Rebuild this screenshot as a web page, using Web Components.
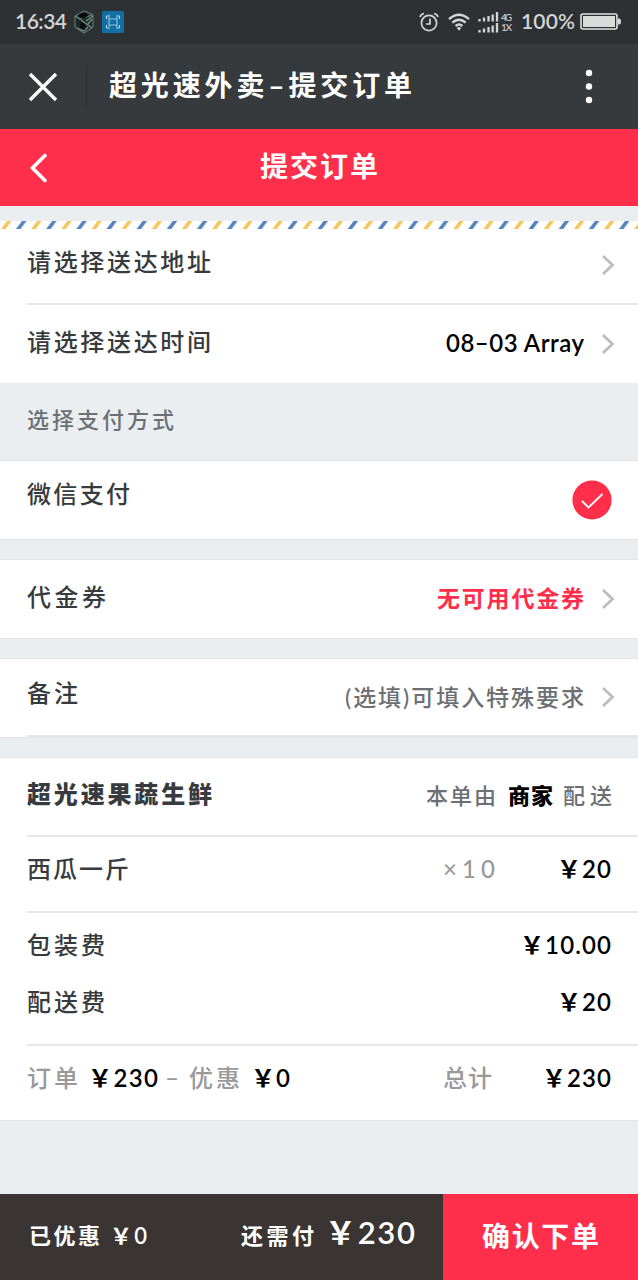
<!DOCTYPE html>
<html lang="zh-CN">
<head>
<meta charset="utf-8">
<title>提交订单</title>
<style>
  body {
    margin: 0;
    width: 638px;
    height: 1280px;
    overflow: hidden;
    background: #ebeef1;
    color: #373b3e;
    font-family: Lato, "Noto Sans CJK SC", sans-serif;
    font-weight: 500;
  }
</style>
</head>
<body>
<order-app></order-app>

<script>
const define = (name, html, setup) => {
  const template = document.createElement('template');
  template.innerHTML = html;

  customElements.define(name, class extends HTMLElement {
    constructor() {
      super();
      this.attachShadow({ mode: 'open' }).appendChild(template.content.cloneNode(true));
    }

    connectedCallback() {
      if (setup) setup(this, this.shadowRoot);
    }
  });
};

// one line of text, tracked out until it is `fit` pixels wide
define('fit-text', `
<style>
  :host {
    display: block;
    flex: none;
    line-height: 1;
  }
  span { display: block; width: max-content; white-space: nowrap; }
</style>
<span><slot></slot></span>
`, (host, root) => {
  const span = root.querySelector('span');
  const fit = Number(host.getAttribute('fit'));
  host.style.fontSize = `${host.getAttribute('size') || 24}px`;
  span.style.letterSpacing = '0px';
  const gaps = Math.max(host.textContent.length - 1, 1);
  const spacing = (fit - span.getBoundingClientRect().width) / gaps;
  span.style.letterSpacing = `${spacing}px`;
  span.style.marginRight = `${-spacing}px`;
});

const ICONS = {
  cube: [22, 24, `<path d="M11 1L20 5v12l-9 6-9-6V6z" fill="#1d2927" stroke="#5d756e" stroke-width="1.200"/>
    <path d="M2 6l5 3 12-4M8 10l11 8M4 18l7 3 4-4M13 11l7-5M15 14l4-5" fill="none" stroke="#769087" stroke-width="1.300"/>
    <path d="M6 4l7-1 2 3-5 3-4-2zM8 12l4 2v6l-5-2z" fill="#050a0a"/>`],
  capture: [22, 22, `<rect width="22" height="22" rx="1.5" fill="#126fa5"/>
    <path d="M4.500 8V5H8M14 5h3.500v3M17.500 14v3H14M8 17H4.500v-3" fill="none" stroke="#b8dbed" stroke-width="1"/>
    <path d="M7 7l1.500 1h5L15 7v8l-1.500-1h-5L7 15z" fill="none" stroke="#8fc1dd" stroke-width="1.200"/>`],
  alarm: [20, 20, `<g fill="none" stroke="#d3d5d6" stroke-width="1.700"><circle cx="10" cy="11" r="7.600"/>
    <path d="M1 5Q2 2 5 1.500M19 5Q18 2 15 1.500M11 6.500V12H7"/></g>`],
  wifi: [22, 18, `<g fill="none" stroke="#d3d5d6" stroke-width="2.400"><path d="M1 6.200Q11-2.500 21 6.200"/>
    <path d="M4.300 9.700Q11 4 17.700 9.700"/><path d="M7.600 13Q11 10 14.400 13"/></g>
    <path d="M8.800 15Q11 13.200 13.200 15L11 17.700z" fill="#d3d5d6"/>`],
  signal: [21, 21, `<path d="M1.500 7v2.500M6 5.500v4M10.500 4v5.500M14.700 2.500v7M19 0v9.500M1.500 18v2.500M6 16.500v4M10.500 15v5.500M14.700 13.500v7M19 11v9.500"
    fill="none" stroke="#d3d5d6" stroke-width="2.300"/>`],
  battery: [42, 18, `<rect x="1" y="1" width="36" height="15" rx="2" fill="none" stroke="#e4e5e5" stroke-width="1.600"/>
    <rect x="3" y="3" width="32" height="11" fill="#d9dada"/><path d="M38 5.500h1.500Q41 6 41 8.500t-1.500 3H38z" fill="#d9dada"/>`],
  close: [30, 30, `<path d="M2 2l26 26M28 2L2 28" stroke="#fff" stroke-width="3.300"/>`],
  dots: [8, 36, `<g fill="#fff"><circle cx="4" cy="4" r="3.200"/><circle cx="4" cy="17.500" r="3.200"/><circle cx="4" cy="31" r="3.200"/></g>`],
  back: [20, 30, `<path d="M16 2.500L3.500 15 16 27.500" fill="none" stroke="#fff" stroke-width="3.600" stroke-linecap="round"/>`],
  chevron: [14, 22, `<path d="M2 2l9.500 9L2 20" fill="none" stroke="#bcbcbc" stroke-width="2.700"/>`],
  check: [40, 40, `<circle cx="20" cy="20" r="19.600" fill="#ff2e4a"/>
    <path d="M10 21l6.500 6.500L30.500 14" fill="none" stroke="#fff" stroke-width="1.800"/>`],
};

define('ui-icon', `
<style>
  :host { display: block; flex: none; }
  svg { display: block; }
</style>
<div></div>
`, (host, root) => {
  const [w, h, shapes] = ICONS[host.getAttribute('name')];
  root.querySelector('div').innerHTML = `<svg width="${w}" height="${h}" viewBox="0 0 ${w} ${h}">${shapes}</svg>`;
});

define('status-bar', `
<style>
  :host {
    display: flex;
    align-items: center;
    box-sizing: border-box;
    height: 44px;
    padding: 0 16px 0 15px;
    background: #2e3133;
    color: #d3d5d6;
  }
  .push { margin-left: auto; }
  .net { margin: 0 9px 0 2px; }
  .big { font-weight: 600; padding-bottom: 4px; }
</style>
<fit-text class="big" size="21" fit="52">16:34</fit-text>
<ui-icon name="cube" style="margin-left:6px"></ui-icon>
<ui-icon name="capture" style="margin-left:7px"></ui-icon>
<ui-icon name="alarm" class="push"></ui-icon>
<ui-icon name="wifi" style="margin:0 8px 0 9px"></ui-icon>
<ui-icon name="signal"></ui-icon>
<div class="net"><fit-text size="10" fit="11">4G</fit-text><fit-text size="10" fit="11">1X</fit-text></div>
<fit-text class="big" size="21" fit="54">100%</fit-text>
<ui-icon name="battery" style="margin-left:5px"></ui-icon>
`);

define('nav-bar', `
<style>
  :host {
    display: flex;
    align-items: center;
    box-sizing: border-box;
    height: 85px;
    padding: 0 45px 0 28px;
    background: #373a3c;
    color: #fff;
    font-weight: 700;
  }
  i { width: 1px; height: 43px; margin: 0 22px 0 28px; background: #2b2e30; }
  .push { margin-left: auto; }
</style>
<ui-icon name="close"></ui-icon>
<i></i>
<slot></slot>
<ui-icon name="dots" class="push"></ui-icon>
`);

define('page-header', `
<style>
  :host {
    display: grid;
    grid-template-columns: 1fr auto 1fr;
    align-items: center;
    height: 77px;
    padding: 0 29px;
    background: #ff2e4a;
    color: #fff;
    font-weight: 700;
  }
</style>
<ui-icon name="back"></ui-icon>
<slot></slot>
`);

define('air-mail', `
<style>
  :host { display: block; height: 8px; background: #fff; }
  svg { display: block; }
</style>
<svg width="638" height="8">
  <pattern id="stripes" width="30.150" height="8" patternUnits="userSpaceOnUse">
    <path d="M1 8h4.500L11.500 0H7z" fill="#f7c65b"/>
    <path d="M16 8h4.500L26.500 0H22z" fill="#5482bd"/>
  </pattern>
  <rect width="638" height="8" fill="url(#stripes)"/>
</svg>
`);

define('list-row', `
<style>
  :host {
    display: flex;
    align-items: center;
    box-sizing: border-box;
    padding: 0 26px 0 27px;
    background: #fff;
  }
  .end { display: flex; align-items: center; margin-left: auto; }
  ::slotted(fit-text) { padding-bottom: 2px; }
</style>
<slot></slot>
<div class="end"><slot name="end"></slot></div>
`);

define('list-group', `
<style>
  :host {
    display: block;
    box-sizing: border-box;
    background: #fff;
    border-top: 1px solid #e2e4e7;
    border-bottom: 1px solid #e2e4e7;
  }
</style>
<slot></slot>
`);

define('inset-line', `
<style>
  :host { display: block; height: 2px; background: #fff; }
  div { height: 2px; margin-left: 27px; background: #e6e7e8; }
</style>
<div></div>
`);

define('pay-bar', `
<style>
  :host {
    display: flex;
    height: 86px;
    background: #3a3532;
    color: #fff;
    font-weight: 600;
  }
  .sum {
    display: flex;
    align-items: center;
    flex: 1;
    padding: 0 26px 2px 29px;
  }
  .due { display: flex; align-items: center; margin-left: auto; }
  .button {
    display: flex;
    align-items: center;
    justify-content: center;
    width: 195px;
    background: #ff2e4a;
    font-weight: 700;
  }
</style>
<div class="sum">
  <fit-text size="22" fit="71">已优惠</fit-text>
  <fit-text size="22" fit="37" style="margin-left:10px">￥0</fit-text>
  <div class="due">
    <fit-text size="22" fit="73">还需付</fit-text>
    <fit-text size="31" fit="90" style="margin:-8px 2px 0 11px">￥230</fit-text>
  </div>
</div>
<div class="button"><fit-text size="28" fit="117" style="padding-bottom:2px">确认下单</fit-text></div>
`);

define('order-app', `
<style>
  :host {
    display: flex;
    flex-direction: column;
    height: 1280px;
  }
  .gap { height: 15px; flex: none; }
  .section { height: 77px; box-sizing: border-box; padding: 26px 27px; }
  list-group + list-group { margin-top: 19px; }
  pay-bar { margin-top: auto; }
  .black { color: #000; font-weight: 600; }
  .grey { color: #6c7074; }
  .light { color: #999; }
  .red { color: #ff2e4a; font-weight: 700; }
  .bold { font-weight: 900; }
  [name="chevron"] { margin: 0 -3px 0 17px; }
</style>
<status-bar></status-bar>
<nav-bar><fit-text size="28" fit="303" style="margin-bottom:4px">超光速外卖–提交订单</fit-text></nav-bar>
<page-header><fit-text size="28" fit="118" style="margin-bottom:3px">提交订单</fit-text></page-header>
<div class="gap"></div>
<air-mail></air-mail>
<list-row style="height:74px">
  <fit-text fit="184" style="margin-bottom:7px">请选择送达地址</fit-text>
  <ui-icon slot="end" name="chevron" style="margin-bottom:2px"></ui-icon>
</list-row>
<inset-line></inset-line>
<list-row style="height:78px">
  <fit-text fit="184" style="margin-bottom:2px">请选择送达时间</fit-text>
  <fit-text slot="end" class="black" fit="138">08–03 Array</fit-text>
  <ui-icon slot="end" name="chevron"></ui-icon>
</list-row>
<div class="section"><fit-text size="22" fit="147" class="grey">选择支付方式</fit-text></div>
<list-group>
  <list-row style="height:78px">
    <fit-text fit="103" style="margin-bottom:11px">微信支付</fit-text>
    <ui-icon slot="end" name="check"></ui-icon>
  </list-row>
</list-group>
<list-group>
  <list-row style="height:78px">
    <fit-text fit="79" style="margin-bottom:3px">代金券</fit-text>
    <fit-text slot="end" class="red" size="23" fit="147">无可用代金券</fit-text>
    <ui-icon slot="end" name="chevron"></ui-icon>
  </list-row>
</list-group>
<list-group>
  <list-row style="height:76px">
    <fit-text fit="51" style="margin-bottom:6px">备注</fit-text>
    <fit-text slot="end" class="grey" size="23" fit="239" style="padding:0">(选填)可填入特殊要求</fit-text>
    <ui-icon slot="end" name="chevron"></ui-icon>
  </list-row>
  <inset-line></inset-line>
</list-group>
<list-group>
  <list-row style="height:77px">
    <fit-text fit="185" class="bold" style="margin-bottom:3px">超光速果蔬生鲜</fit-text>
    <fit-text slot="end" class="grey" size="22" fit="70">本单由</fit-text>
    <fit-text slot="end" class="black bold" size="22" fit="45" style="margin-left:12px">商家</fit-text>
    <fit-text slot="end" class="grey" size="22" fit="49" style="margin-left:10px">配送</fit-text>
  </list-row>
  <inset-line></inset-line>
  <list-row style="height:74px; padding-bottom:8px">
    <fit-text fit="102">西瓜一斤</fit-text>
    <fit-text slot="end" class="light" fit="52">×10</fit-text>
    <fit-text slot="end" class="black" fit="54" style="margin-left:62px; margin-right:1px">￥20</fit-text>
  </list-row>
  <inset-line></inset-line>
  <list-row style="height:65px">
    <fit-text fit="78">包装费</fit-text>
    <fit-text slot="end" class="black" fit="91" style="margin-right:1px">￥10.00</fit-text>
  </list-row>
  <list-row style="height:66px; padding-bottom:16px">
    <fit-text fit="78">配送费</fit-text>
    <fit-text slot="end" class="black" fit="54" style="margin-right:1px">￥20</fit-text>
  </list-row>
  <inset-line></inset-line>
  <list-row style="height:74px; padding-bottom:8px">
    <fit-text class="light" fit="51">订单</fit-text>
    <fit-text class="black" fit="70" style="margin-left:10px">￥230</fit-text>
    <fit-text class="light" fit="14" style="margin-left:7px">–</fit-text>
    <fit-text class="light" fit="51" style="margin-left:10px">优惠</fit-text>
    <fit-text class="black" fit="39" style="margin-left:11px">￥0</fit-text>
    <fit-text slot="end" class="light" fit="49">总计</fit-text>
    <fit-text slot="end" class="black" fit="69" style="margin-left:50px; margin-right:1px">￥230</fit-text>
  </list-row>
</list-group>
<pay-bar></pay-bar>
`);
</script>
</body>
</html>
